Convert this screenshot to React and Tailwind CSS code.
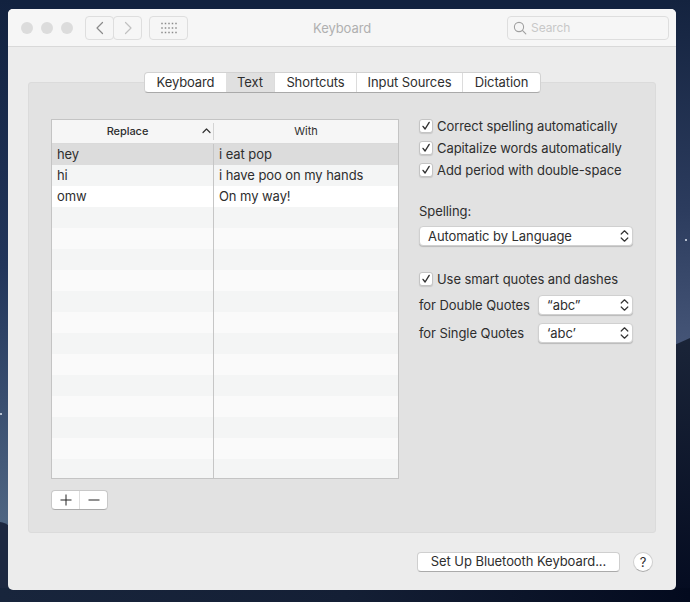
import React from "react";

const F = { fontFamily: "Inter, 'Liberation Sans', sans-serif" };

function Check() {
  return (
    <span className="flex h-[14px] w-[14px] shrink-0 items-center justify-center rounded-[3px] border border-[#c4c4c4] bg-white shadow-[0_1px_1px_rgba(0,0,0,0.12)]">
      <svg width="10" height="10" viewBox="0 0 10 10" fill="none" stroke="#333" strokeWidth="1.4" strokeLinecap="round" strokeLinejoin="round">
        <path d="M2 5.4 L4.1 8 L8.2 1.4" />
      </svg>
    </span>
  );
}

function CheckRow({ children, className = "" }) {
  return (
    <div className={`flex h-[22px] items-center gap-[4px] ${className}`}>
      <Check />
      <span>{children}</span>
    </div>
  );
}

function Updown() {
  return (
    <svg width="9" height="14" viewBox="0 0 9 14" fill="none" stroke="#333" strokeWidth="1.2" strokeLinecap="round" strokeLinejoin="round">
      <path d="M1.2 5 L4.5 1.8 L7.8 5" />
      <path d="M1.2 9 L4.5 12.2 L7.8 9" />
    </svg>
  );
}

function Select({ label, className = "" }) {
  return (
    <div className={`flex h-[20px] items-center justify-between rounded-[4px] border border-[#d0d0d0] bg-white pl-[8px] pr-[3px] shadow-[0_1px_1px_rgba(0,0,0,0.18)] ${className}`}>
      <span>{label}</span>
      <Updown />
    </div>
  );
}

const rowColors = Array.from({ length: 13 }, (_, i) => (i % 2 === 0 ? "bg-[#f4f5f5]" : "bg-[#fafafa]"));

function Row({ a, b, className }) {
  return (
    <div className={`flex h-[21px] items-center ${className}`}>
      <div className="w-[161px] shrink-0 pl-[5px]">{a}</div>
      <div className="h-full w-px shrink-0 bg-[#c6c6c6]" />
      <div className="flex-1 pl-[5px]">{b}</div>
    </div>
  );
}

const tabs = ["Keyboard", "Text", "Shortcuts", "Input Sources", "Dictation"];
const tabWidths = ["w-[81px]", "w-[48px]", "w-[82px]", "w-[106px]", "w-[78px]"];

export default function App() {
  return (
    <div style={F} className="relative h-[602px] w-[690px] overflow-hidden bg-[#12223f] text-[13px] leading-none tracking-[-0.07px] text-[#2e2e2e]">
      <svg className="absolute inset-0" width="690" height="602" viewBox="0 0 690 602">
        <defs>
          <linearGradient id="l" x1="0" y1="0" x2="0" y2="1">
            <stop offset="0" stopColor="#12223f" />
            <stop offset="0.5" stopColor="#22355a" />
            <stop offset="1" stopColor="#4f6683" />
          </linearGradient>
          <linearGradient id="r" x1="0" y1="0" x2="0" y2="1">
            <stop offset="0" stopColor="#14233f" />
            <stop offset="0.6" stopColor="#2c3c5e" />
            <stop offset="1" stopColor="#465678" />
          </linearGradient>
          <linearGradient id="rd" x1="0" y1="0" x2="0" y2="1">
            <stop offset="0" stopColor="#1a2438" />
            <stop offset="1" stopColor="#040b20" />
          </linearGradient>
          <linearGradient id="b" x1="0" y1="0" x2="1" y2="0">
            <stop offset="0" stopColor="#18253c" />
            <stop offset="0.5" stopColor="#141f35" />
            <stop offset="1" stopColor="#030a1e" />
          </linearGradient>
        </defs>
        <rect x="0" y="0" width="12" height="530" fill="url(#l)" />
        <path d="M0 522 Q5 522 12 528 L12 602 L0 602 Z" fill="#1d2840" />
        <rect x="670" y="0" width="20" height="350" fill="url(#r)" />
        <path d="M670 347 L690 338 L690 602 L670 602 Z" fill="url(#rd)" />
        <rect x="0" y="588" width="690" height="14" fill="url(#b)" />
        <circle cx="686" cy="240" r="1" fill="#dfe6f0" />
        <circle cx="1" cy="414" r="1" fill="#dfe6f0" />
      </svg>
      <div className="relative ml-[8px] mt-[9px] flex h-[581px] w-[668px] flex-col overflow-hidden rounded-[5px] bg-[#ececec]">
        <header className="relative flex h-[38px] shrink-0 items-center border-b border-[#d9d9d9] bg-[#f6f6f6] pl-[13px] pr-[7px]">
          <div className="flex gap-[8px]">
            <span className="h-[12px] w-[12px] rounded-full bg-[#dcdcdc]" />
            <span className="h-[12px] w-[12px] rounded-full bg-[#dcdcdc]" />
            <span className="h-[12px] w-[12px] rounded-full bg-[#dcdcdc]" />
          </div>
          <div className="ml-[12px] flex">
            <div className="flex h-[24px] w-[29px] items-center justify-center rounded-[4px] border border-[#dedede]">
              <svg width="10" height="14" viewBox="0 0 10 14" fill="none" stroke="#8a8a8a" strokeWidth="1.2" strokeLinecap="round" strokeLinejoin="round"><path d="M7.5 1.5 L2 7 L7.5 12.5" /></svg>
            </div>
            <div className="-ml-px flex h-[24px] w-[29px] items-center justify-center rounded-[4px] border border-[#dedede]">
              <svg width="10" height="14" viewBox="0 0 10 14" fill="none" stroke="#c0c0c0" strokeWidth="1.2" strokeLinecap="round" strokeLinejoin="round"><path d="M2.5 1.5 L8 7 L2.5 12.5" /></svg>
            </div>
          </div>
          <div className="ml-[7px] flex h-[24px] w-[39px] items-center justify-center rounded-[4px] border border-[#dedede]">
            <svg width="16" height="12" viewBox="0 0 16 12" fill="#8c8c8c">
              {[1.5, 6, 10.5].flatMap((y) => [1, 4.5, 8, 11.5, 15].map((x) => <rect key={`${x}-${y}`} x={x - 0.75} y={y - 0.75} width="1.5" height="1.5" />))}
            </svg>
          </div>
          <div className="flex-1 pl-[125px] pt-px text-left text-[13px] text-[#b0b0b0]">Keyboard</div>
          <div className="flex h-[24px] w-[162px] items-center gap-[4px] rounded-[4px] border border-[#dedede] pl-[5px] text-[12px] text-[#c8c8c8]">
            <svg width="14" height="14" viewBox="0 0 14 14" fill="none" stroke="#a0a0a0" strokeWidth="1.1" strokeLinecap="round"><circle cx="6" cy="6" r="4.6" /><path d="M9.4 9.4 L12.8 12.8" /></svg>
            <span>Search</span>
          </div>
        </header>

        <main className="relative mx-[20px] mt-[35px] flex h-[451px] flex-col rounded-[3px] border border-[#dbdbdb] bg-[#e2e2e2]">
          <div className="absolute left-[115px] top-[-11px] flex h-[21px] overflow-hidden rounded-[4px] border border-[#d2d2d2] border-b-[#a9a9a9] bg-white tracking-[-0.1px]">
            {tabs.map((t, i) => (
              <div key={t} className={`flex h-full items-center justify-center ${tabWidths[i]} ${i === 1 ? "bg-[#e0e0e0]" : ""} ${i > 1 ? "border-l border-[#dcdcdc]" : ""}`}>{t}</div>
            ))}
          </div>

          <div className="ml-[22px] mr-[22px] mt-[36px] flex gap-[20px]">
            <div className="w-[348px] shrink-0">
              <div className="h-[360px] w-[348px] overflow-hidden border border-[#c4c4c4] bg-[#fafafa]">
                <div className="flex h-[24px] items-center border-b border-[#dadada] bg-[#f6f6f6] text-[11px] font-medium">
                  <div className="relative flex w-[161px] shrink-0 justify-center pr-[10px]">
                    <span>Replace</span>
                    <svg className="absolute right-[2px] top-[1px]" width="9" height="8" viewBox="0 0 9 8" fill="none" stroke="#333" strokeWidth="1.2" strokeLinecap="round" strokeLinejoin="round"><path d="M1 5.5 L4.5 2 L8 5.5" /></svg>
                  </div>
                  <div className="h-[17px] w-px shrink-0 bg-[#d4d4d4]" />
                  <div className="flex flex-1 justify-center font-normal">With</div>
                </div>
                <Row a="hey" b="i eat pop" className="bg-[#dcdcdc]" />
                <Row a="hi" b="i have poo on my hands" className="bg-[#f4f5f5]" />
                <Row a="omw" b="On my way!" className="bg-white" />
                {rowColors.map((c, i) => <Row key={i} a="" b="" className={c} />)}
              </div>
              <div className="mt-[11px] flex h-[20px] w-[57px] overflow-hidden rounded-[4px] border border-[#c8c8c8] border-b-[#aaaaaa] bg-white">
                <div className="flex w-[28px] items-center justify-center border-r border-[#dedede]">
                  <svg width="12" height="12" viewBox="0 0 12 12" stroke="#222" strokeWidth="1"><path d="M6 0.5 V11.5 M0.5 6 H11.5" /></svg>
                </div>
                <div className="flex flex-1 items-center justify-center">
                  <svg width="12" height="12" viewBox="0 0 12 12" stroke="#222" strokeWidth="1"><path d="M0.5 6 H11.5" /></svg>
                </div>
              </div>
            </div>

            <div className="-mt-[4px] w-[214px] shrink-0">
              <CheckRow>Correct spelling automatically</CheckRow>
              <CheckRow>Capitalize words automatically</CheckRow>
              <CheckRow>Add period with double-space</CheckRow>
              <div className="mt-[24px]">Spelling:</div>
              <Select className="mt-[8px] w-[214px]" label="Automatic by Language" />
              <CheckRow className="mt-[22px]">Use smart quotes and dashes</CheckRow>
              <div className="mt-[5px] flex items-center justify-between">
                <span>for Double Quotes</span>
                <Select className="w-[95px]" label="“abc”" />
              </div>
              <div className="mt-[8px] flex items-center justify-between">
                <span>for Single Quotes</span>
                <Select className="w-[95px]" label="‘abc’" />
              </div>
            </div>
          </div>
        </main>

        <footer className="mr-[23px] mt-[19px] flex items-center justify-end gap-[13px]">
          <div className="flex h-[20px] w-[203px] items-center justify-center rounded-[4px] border border-[#cfcfcf] border-b-[#aaaaaa] bg-white pb-px">Set Up Bluetooth Keyboard...</div>
          <div className="flex h-[20px] w-[20px] items-center justify-center rounded-full border border-[#cfcfcf] border-b-[#aaaaaa] bg-white text-[13px]">?</div>
        </footer>
      </div>
    </div>
  );
}
